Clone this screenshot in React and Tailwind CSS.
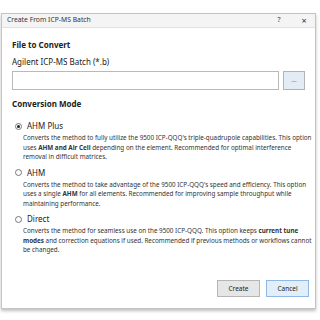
import React from 'react'

const font = { fontFamily: '"Noto Sans", "Open Sans", sans-serif' }

function Radio({ checked, label }) {
  return (
    <div className="flex items-center h-[12px]">
      <span className="w-[7px] h-[7px] rounded-full border border-[#777] bg-white flex items-center justify-center ml-[3px]">
        {checked && <span className="w-[3px] h-[3px] rounded-full bg-[#222]" />}
      </span>
      <span className="ml-[5px] text-[8px] text-[#222]">{label}</span>
    </div>
  )
}

function Desc({ children }) {
  return (
    <div className="ml-[11px] mt-[1px] text-[6.3px] leading-[9.5px] text-[#333] whitespace-nowrap">
      {children}
    </div>
  )
}

export default function App() {
  return (
    <div className="w-[320px] h-[320px] bg-white pt-[13px] pl-[1px]" style={font}>
      <div className="w-[315px] h-[296px] border border-[#c4c4c4] bg-white shadow-[0_2px_3px_rgba(0,0,0,0.25)] flex flex-col">
        {/* title bar */}
        <div className="h-[14px] bg-[#f4f4f4] border-b border-[#e2e2e2] flex items-center px-[5px] text-[6.8px] text-[#333]">
          <span className="flex-1">Create From ICP-MS Batch</span>
          <span className="w-[8px] text-center mr-[17px] text-[7px]">?</span>
          <span className="w-[8px] text-center mr-[2px] text-[9px] leading-none">×</span>
        </div>

        <div className="flex-1 flex flex-col px-[10px]">
          <div className="mt-[12px] h-[10px] flex items-center text-[8px] font-bold text-[#222]">File to Convert</div>
          <div className="mt-[7px] h-[10px] flex items-center text-[8px] text-[#222]">Agilent ICP-MS Batch (*.b)</div>
          <div className="mt-[4px] flex gap-[4px]">
            <div className="w-[270px] h-[19px] border border-[#b9b9b9] bg-white" />
            <div className="w-[22px] h-[19px] border border-[#b3b3b3] bg-[#e3ebf5] flex items-center justify-center text-[6px] text-[#444]">...</div>
          </div>

          <div className="mt-[9px] h-[10px] flex items-center text-[8px] font-bold text-[#222]">Conversion Mode</div>

          <div className="mt-[11px]">
            <Radio checked label="AHM Plus" />
            <Desc>
              Converts the method to fully utilize the 9500 ICP-QQQ's triple-quadrupole capabilities. This option<br />
              uses <b>AHM and Air Cell</b> depending on the element. Recommended for optimal interference<br />
              removal in difficult matrices.
            </Desc>
          </div>

          <div className="mt-[5px]">
            <Radio label="AHM" />
            <Desc>
              Converts the method to take advantage of the 9500 ICP-QQQ's speed and efficiency. This option<br />
              uses a single <b>AHM</b> for all elements. Recommended for improving sample throughput while<br />
              maintaining performance.
            </Desc>
          </div>

          <div className="mt-[5px]">
            <Radio label="Direct" />
            <Desc>
              Converts the method for seamless use on the 9500 ICP-QQQ. This option keeps <b>current tune</b><br />
              <b>modes</b> and correction equations if used. Recommended if previous methods or workflows cannot<br />
              be changed.
            </Desc>
          </div>

          <div className="mt-auto mb-[11px] -mr-[4px] flex justify-end gap-[6px]">
            <button className="w-[43px] h-[17px] border border-[#b5b5b5] bg-[#e6e6e6] text-[6.5px] text-[#222]">Create</button>
            <button className="w-[43px] h-[17px] border border-[#8fb8e4] bg-[#e2eefa] text-[6.5px] text-[#222]">Cancel</button>
          </div>
        </div>
      </div>
    </div>
  )
}
